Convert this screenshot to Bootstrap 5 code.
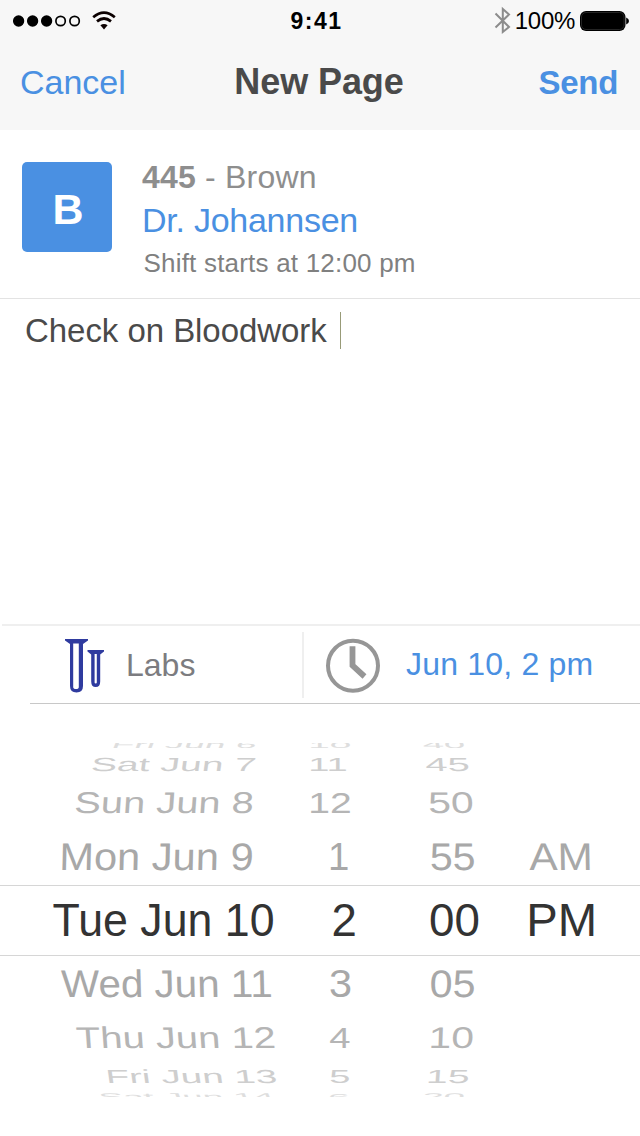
<!DOCTYPE html>
<html lang="en">
<head>
<meta charset="utf-8">
<meta name="viewport" content="width=device-width, initial-scale=1">
<title>New Page</title>
<link rel="stylesheet" href="https://cdn.jsdelivr.net/npm/bootstrap@5.3.0/dist/css/bootstrap.min.css">
<style>
body{font-family:"Liberation Sans",Arial,sans-serif;background:#fff;color:#4a4a4a;width:640px;height:1136px;overflow:hidden}
svg{display:block;flex:none}
.top-area{height:130px;background:#f7f7f7}
.status{height:42px;color:#000;display:grid;grid-template-columns:1fr auto 1fr;font-size:23px;line-height:42px}
.clock-text{font-weight:700;letter-spacing:1.5px;margin-right:7px}
.charge{font-size:24px;letter-spacing:-.3px}
.titlebar{height:80px;padding:0 22px 0 20px;display:grid;grid-template-columns:1fr auto 1fr;font-size:34px;line-height:80px}
.titlebar a,.accent{color:#4a90e2;text-decoration:none}
.send{font-size:33px;letter-spacing:-.3px}
.title-text{font-size:36px;font-weight:700;letter-spacing:-.1px}
.recipient{height:169px;border-bottom:1px solid #e3e3e3;padding:32px 22px 0}
.avatar{width:90px;height:90px;border-radius:5px;background:#4a90e2;color:#fff;font-size:43px;font-weight:700;line-height:94px;padding-left:2px}
.details{padding-left:30px;color:#8e8e8e}
.room{font-size:32px;line-height:30px;height:37px;letter-spacing:.2px}
.doctor{font-size:34px;line-height:42px;height:44px;letter-spacing:-.25px}
.shift{font-size:26px;line-height:40px;height:40px;padding-left:1.5px;letter-spacing:.2px;color:#808080}
.message{height:325px;padding:13px 25px 0;font-size:33px;line-height:37px;letter-spacing:-.05px}
.caret{width:1px;height:37px;background:#989b78;margin-left:13px}
.options{height:80px}
.options-inner{height:79px;border-top:2px solid #efefef;margin-left:2px}
.labs{width:300px;padding-left:63px;font-size:32px;color:#7c7c80}
.labs-text{padding-left:21px;line-height:78px}
.split{width:2px;height:66px;background:#efefef;margin-top:6px}
.when{padding-left:21px;font-size:32px}
.when-text{padding-left:25px;line-height:76px;margin-bottom:2px;letter-spacing:.2px}
.options-rule{height:1px;background:#c8c8c8;margin-left:30px}
.picker{height:354px;margin-top:39px;overflow:hidden;font-size:46px;line-height:46px}
.wheel-row{display:grid;grid-template-columns:300px 100px 120px 120px;white-space:pre;overflow:visible}
.wheel-row span{display:block;width:max-content;height:46px;transform-origin:0 38.94px}
.selected{border-top:1px solid #d6d6d6;border-bottom:1px solid #d6d6d6}
</style>
<script src="https://cdn.jsdelivr.net/npm/bootstrap@5.3.0/dist/js/bootstrap.bundle.min.js"></script>
</head>
<body>
<header class="top-area">
  <div class="status">
    <div class="d-flex align-items-center">
      <svg width="130" height="42" viewBox="0 0 130 42">
        <g stroke="#000" stroke-width="1.7"><circle cx="18.6" cy="21" r="4.8" fill="#000"/><circle cx="32.6" cy="21" r="4.8" fill="#000"/><circle cx="46.6" cy="21" r="4.8" fill="#000"/><circle cx="60.6" cy="21" r="4.7" fill="none"/><circle cx="74.6" cy="21" r="4.7" fill="none"/></g>
        <g fill="none" stroke="#0b0000" stroke-width="2.7"><path d="M93.200 17.200Q104 8 114.800 17.200"/><path d="M97 21.400Q104 15.600 111 21.400"/></g>
        <path d="M100.400 25.300Q104 22.600 107.600 25.300L104 29.400Z" fill="#0b0000"/>
      </svg>
    </div>
    <div class="clock-text">9:41</div>
    <div class="d-flex align-items-center justify-content-end">
      <svg width="24" height="42" viewBox="0 0 24 42"><path d="M4.500 13.500L18 27L11.800 32V9L18 14.500L4.500 27.500" fill="none" stroke="#8c8c8c" stroke-width="2"/></svg>
      <span class="charge">100%</span>
      <svg width="65" height="42" viewBox="0 0 65 42"><rect x="5" y="11" width="45.500" height="20" rx="6" fill="#000"/><path d="M51.200 17.500Q54 18.500 54 21T51.200 24.500Z" fill="#000"/><rect x="6.500" y="12.500" width="42.500" height="17" rx="4.500" fill="none" stroke="#3c3c3c" stroke-width=".6"/></svg>
    </div>
  </div>
  <nav class="titlebar">
    <div><a href="#">Cancel</a></div>
    <div class="title-text">New Page</div>
    <div class="text-end"><a href="#" class="fw-bold send">Send</a></div>
  </nav>
</header>
<section class="recipient d-flex">
  <div class="avatar text-center">B</div>
  <div class="details">
    <div class="room"><b>445</b> - Brown</div>
    <div class="doctor accent">Dr. Johannsen</div>
    <div class="shift">Shift starts at 12:00 pm</div>
  </div>
</section>
<section class="message d-flex"><span>Check on Bloodwork</span><span class="caret"></span></section>
<section class="options">
  <div class="options-inner d-flex">
    <div class="labs d-flex align-items-center">
      <svg width="40" height="56" viewBox="0 0 40 56" fill="#2f3b9f"><path fill-rule="evenodd" d="M0 2H23V3.500L18 7V49Q18 55.500 11.500 55.500T5 49V7L0 3.500ZM8.200 6.500V50Q8.200 52 11 52T13.800 50V6.500Z"/><path fill-rule="evenodd" d="M22.500 13H39V14.500L35.200 17.500V44.500Q35.200 50 30.700 50T26.200 44.500V17.500L22.500 14.500ZM29.600 17V45.500Q29.600 46.500 30.700 46.500T31.800 45.500V17Z"/></svg>
      <span class="labs-text">Labs</span>
    </div>
    <div class="split"></div>
    <div class="when d-flex align-items-center">
      <svg width="56" height="56" viewBox="0 0 56 56" fill="none" stroke="#969696"><circle cx="28" cy="28.700" r="25" stroke-width="4"/><path d="M27.500 9.300V28.500L39.500 39.500" stroke-width="5.800"/></svg>
      <span class="when-text accent">Jun 10, 2 pm</span>
    </div>
  </div>
  <div class="options-rule"></div>
</section>
<!-- data-row: row height, baseline, cap height, lean in degrees; data-x: label's left and right edge -->
<section class="picker">
  <div class="wheel-row" data-row="6 5 7 22" style="color:#dedede"><span data-x="113 257">Fri Jun 6</span><span data-x="310.7 350">10</span><span data-x="422.7 464.5">40</span></div>
  <div class="wheel-row" data-row="27 22.3 13.6 8" style="color:#cecece"><span data-x="92 256">Sat Jun 7</span><span data-x="310.7 346.5">11</span><span data-x="425.7 468.7">45</span></div>
  <div class="wheel-row" data-row="47 37 21.5 4" style="color:#b5b5b5"><span data-x="75.5 253.3">Sun Jun 8</span><span data-x="310.7 350.3">12</span><span data-x="428.7 472.7">50</span></div>
  <div class="wheel-row" data-row="62 47.3 27.6 1.5" style="color:#a8a8a8"><span data-x="61.7 252.7">Mon Jun 9</span><span data-x="330.5 348">1</span><span data-x="430.5 474.3">55</span><span data-x="529 590">AM</span></div>
  <div class="wheel-row selected" data-row="71 50.3 33 0" style="color:#333"><span data-x="53.5 273">Tue Jun 10</span><span data-x="333.5 355.3">2</span><span data-x="430 478.3">00</span><span data-x="529.3 593.7">PM</span></div>
  <div class="wheel-row" data-row="53 40.8 27.6 -1.5" style="color:#a8a8a8"><span data-x="60.7 271.5">Wed Jun 11</span><span data-x="330 350.7">3</span><span data-x="430.5 474.3">05</span></div>
  <div class="wheel-row" data-row="49 38.7 21.5 -4" style="color:#b5b5b5"><span data-x="76 275">Thu Jun 12</span><span data-x="330 350">4</span><span data-x="431 473">10</span></div>
  <div class="wheel-row" data-row="30 24.5 13.6 -8" style="color:#cecece"><span data-x="107 276.7">Fri Jun 13</span><span data-x="330 349">5</span><span data-x="428.3 468.7">15</span></div>
  <div class="wheel-row" data-row="9 12 7 -22" style="color:#dedede"><span data-x="99 275">Sat Jun 14</span><span data-x="330 348.5">6</span><span data-x="423.3 464.3">20</span></div>
</section>
<script>
// Flatten each label onto the drum: fit its ink to the given edges and squash it to the row's cap height.
const ctx = document.createElement('canvas').getContext('2d');
ctx.font = '46px "Liberation Sans"';
const columns = [0, 300, 400, 520];
document.querySelectorAll('.wheel-row').forEach(row => {
  const [height, base, cap, lean] = row.dataset.row.split(' ').map(Number);
  row.style.height = height + 'px';
  [...row.children].forEach((cell, i) => {
    const [x1, x2] = cell.dataset.x.split(' ').map(Number);
    const m = ctx.measureText(cell.textContent);
    const skew = -lean * [1, 0, -.5, -.7][i];
    const slant = cap * Math.tan(skew * Math.PI / 180);
    const ink = m.actualBoundingBoxRight + m.actualBoundingBoxLeft;
    const sx = (x2 - x1 - Math.abs(slant)) / ink, sy = cap / 33;
    const dx = x1 - columns[i] + m.actualBoundingBoxLeft * sx + Math.max(0, slant);
    cell.style.transform = `translate(${dx}px,${base - 38.94}px) skewX(${skew}deg) scale(${sx},${sy})`;
  });
});
</script>
</body>
</html>
